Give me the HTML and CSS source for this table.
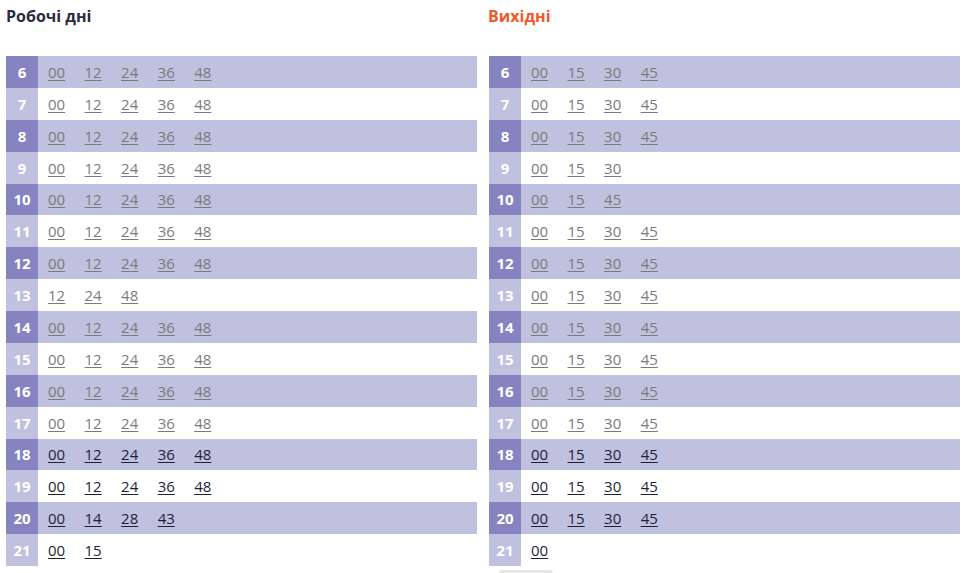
FILE: index.html
```html
<!DOCTYPE html>
<html lang="uk">
<head>
<meta charset="utf-8">
<link rel="stylesheet" href="styles.css">
</head>
<body>
<div class="wrap">
  <section class="col">
    <h2 class="title title-work">Робочі дні</h2>
    <div class="table">
      <div class="row odd"><span class="hour">6</span><span class="mins"><a>00</a><a>12</a><a>24</a><a>36</a><a>48</a></span></div>
      <div class="row"><span class="hour">7</span><span class="mins"><a>00</a><a>12</a><a>24</a><a>36</a><a>48</a></span></div>
      <div class="row odd"><span class="hour">8</span><span class="mins"><a>00</a><a>12</a><a>24</a><a>36</a><a>48</a></span></div>
      <div class="row"><span class="hour">9</span><span class="mins"><a>00</a><a>12</a><a>24</a><a>36</a><a>48</a></span></div>
      <div class="row odd"><span class="hour">10</span><span class="mins"><a>00</a><a>12</a><a>24</a><a>36</a><a>48</a></span></div>
      <div class="row"><span class="hour">11</span><span class="mins"><a>00</a><a>12</a><a>24</a><a>36</a><a>48</a></span></div>
      <div class="row odd"><span class="hour">12</span><span class="mins"><a>00</a><a>12</a><a>24</a><a>36</a><a>48</a></span></div>
      <div class="row"><span class="hour">13</span><span class="mins"><a>12</a><a>24</a><a>48</a></span></div>
      <div class="row odd"><span class="hour">14</span><span class="mins"><a>00</a><a>12</a><a>24</a><a>36</a><a>48</a></span></div>
      <div class="row"><span class="hour">15</span><span class="mins"><a>00</a><a>12</a><a>24</a><a>36</a><a>48</a></span></div>
      <div class="row odd"><span class="hour">16</span><span class="mins"><a>00</a><a>12</a><a>24</a><a>36</a><a>48</a></span></div>
      <div class="row"><span class="hour">17</span><span class="mins"><a>00</a><a>12</a><a>24</a><a>36</a><a>48</a></span></div>
      <div class="row odd"><span class="hour">18</span><span class="mins upcoming"><a>00</a><a>12</a><a>24</a><a>36</a><a>48</a></span></div>
      <div class="row"><span class="hour">19</span><span class="mins upcoming"><a>00</a><a>12</a><a>24</a><a>36</a><a>48</a></span></div>
      <div class="row odd"><span class="hour">20</span><span class="mins upcoming"><a>00</a><a>14</a><a>28</a><a>43</a></span></div>
      <div class="row"><span class="hour">21</span><span class="mins upcoming"><a>00</a><a>15</a></span></div>
    </div>
  </section>
  <section class="col">
    <h2 class="title title-weekend">Вихідні</h2>
    <div class="table">
      <div class="row odd"><span class="hour">6</span><span class="mins"><a>00</a><a>15</a><a>30</a><a>45</a></span></div>
      <div class="row"><span class="hour">7</span><span class="mins"><a>00</a><a>15</a><a>30</a><a>45</a></span></div>
      <div class="row odd"><span class="hour">8</span><span class="mins"><a>00</a><a>15</a><a>30</a><a>45</a></span></div>
      <div class="row"><span class="hour">9</span><span class="mins"><a>00</a><a>15</a><a>30</a></span></div>
      <div class="row odd"><span class="hour">10</span><span class="mins"><a>00</a><a>15</a><a>45</a></span></div>
      <div class="row"><span class="hour">11</span><span class="mins"><a>00</a><a>15</a><a>30</a><a>45</a></span></div>
      <div class="row odd"><span class="hour">12</span><span class="mins"><a>00</a><a>15</a><a>30</a><a>45</a></span></div>
      <div class="row"><span class="hour">13</span><span class="mins"><a>00</a><a>15</a><a>30</a><a>45</a></span></div>
      <div class="row odd"><span class="hour">14</span><span class="mins"><a>00</a><a>15</a><a>30</a><a>45</a></span></div>
      <div class="row"><span class="hour">15</span><span class="mins"><a>00</a><a>15</a><a>30</a><a>45</a></span></div>
      <div class="row odd"><span class="hour">16</span><span class="mins"><a>00</a><a>15</a><a>30</a><a>45</a></span></div>
      <div class="row"><span class="hour">17</span><span class="mins"><a>00</a><a>15</a><a>30</a><a>45</a></span></div>
      <div class="row odd"><span class="hour">18</span><span class="mins upcoming"><a>00</a><a>15</a><a>30</a><a>45</a></span></div>
      <div class="row"><span class="hour">19</span><span class="mins upcoming"><a>00</a><a>15</a><a>30</a><a>45</a></span></div>
      <div class="row odd"><span class="hour">20</span><span class="mins upcoming"><a>00</a><a>15</a><a>30</a><a>45</a></span></div>
      <div class="row"><span class="hour">21</span><span class="mins upcoming"><a>00</a></span></div>
    </div>
    <div class="more"></div>
  </section>
</div>
</body>
</html>
```
FILE: styles.css
```css
html, body {
  margin: 0;
  padding: 0;
  background: #ffffff;
}
body {
  font-family: "Open Sans", "Noto Sans", sans-serif;
  font-size: 15px;
  color: #2b2b40;
}
.wrap {
  display: grid;
  grid-template-columns: 471px 471px;
  column-gap: 12px;
  padding: 0 9px 0 6px;
}
.title {
  margin: 0;
  height: 56px;
  padding-top: 5px;
  box-sizing: border-box;
  font-size: 16px;
  font-weight: 700;
  line-height: 22px;
}
.title-work {
  color: #2a2a42;
}
.title-weekend {
  color: #f05a28;
  margin-left: -1px;
}
.row {
  display: flex;
  align-items: stretch;
  height: 31.875px;
  background: #ffffff;
}
.row.odd {
  background: #c0c0df;
}
.hour {
  width: 32px;
  flex: none;
  display: flex;
  align-items: center;
  justify-content: center;
  font-weight: 700;
  color: #ffffff;
  background: #c0c0df;
}
.row.odd .hour {
  background: #8584c0;
}
.mins {
  display: flex;
  align-items: center;
  gap: 19.4px;
  padding-left: 10px;
}
.mins a {
  color: #7b7b7b;
  text-decoration: underline;
  text-underline-offset: 2px;
  cursor: pointer;
}
.mins.upcoming a {
  color: #1f1f38;
}
.more {
  width: 54px;
  height: 3px;
  margin: 4px 0 0 10px;
  border-radius: 3px 3px 0 0;
  background: #e6e6e6;
}
```
